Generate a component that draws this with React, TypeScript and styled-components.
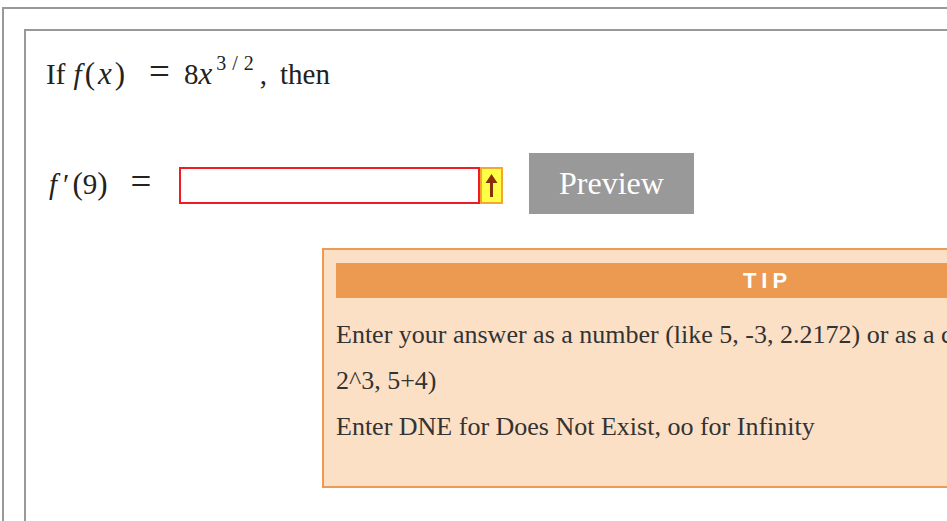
import React from "react";
import styled, { createGlobalStyle } from "styled-components";

const Global = createGlobalStyle`
  html, body { margin: 0; padding: 0; background: #fff; overflow: hidden; }
  body { font-family: "Liberation Serif", "Times New Roman", serif; color: #222; }
`;

const Outer = styled.div`
  margin: 7px 0 0 2px;
  width: 1400px;
  border: 2px solid #999;
  border-right: none;
  padding: 20px 0 0 20px;
`;

const Problem = styled.div`
  border: 2px solid #999;
  border-right: none;
  padding: 25px 20px 40px 20px;
`;

const Question = styled.div`
  font-size: 29px;
  line-height: 36px;
  color: #222;
  white-space: nowrap;
`;

const MI = styled.i<{ $l?: number; $r?: number; $size?: number }>`
  font-family: "Liberation Serif", serif;
  font-style: italic;
  font-size: ${(p) => p.$size ?? 29}px;
  margin-left: ${(p) => p.$l ?? 0}px;
  margin-right: ${(p) => p.$r ?? 0}px;
`;

const Paren = styled.span`
  font-size: 31px;
`;

const Op = styled.span<{ $l: number; $r: number }>`
  font-size: 37px;
  line-height: 0;
  margin-left: ${(p) => p.$l}px;
  margin-right: ${(p) => p.$r}px;
`;

const Sup = styled.sup`
  font-size: 20px;
  line-height: 0;
  vertical-align: 0;
  position: relative;
  top: -14px;
  letter-spacing: 6px;
  margin-left: 3px;
`;

const Then = styled.span`
  margin-left: 13px;
`;

const AnswerRow = styled.div`
  display: flex;
  align-items: center;
  margin-top: 61px;
  font-size: 29px;
`;

const Label = styled.span`
  width: 133px;
  white-space: nowrap;
  padding-left: 3px;
  box-sizing: border-box;
`;

const Prime = styled.span`
  margin: 0 3px 0 6px;
`;

const InputWrap = styled.div`
  display: flex;
  align-items: stretch;
  align-self: flex-start;
  margin-top: 14px;
  height: 37px;
`;

const AnswerInput = styled.input`
  box-sizing: border-box;
  width: 301px;
  height: 37px;
  border: 2px solid #ee1c25;
  outline: none;
  margin: 0;
  padding: 0 6px;
  font-size: 22px;
  background: #fff;
`;

const Flag = styled.div`
  box-sizing: border-box;
  width: 23px;
  height: 37px;
  background: #ffff44;
  border: 2px solid #f4a534;
  display: flex;
  align-items: center;
  justify-content: center;
`;

const PreviewButton = styled.button`
  box-sizing: border-box;
  margin-left: 26px;
  width: 165px;
  height: 61px;
  border: none;
  background: #999;
  color: #fff;
  font-family: "Liberation Serif", "Times New Roman", serif;
  font-size: 32px;
  padding: 0;
`;

const Tip = styled.div`
  box-sizing: border-box;
  margin: 34px 0 0 276px;
  width: 888px;
  border: 2px solid #ee9a52;
  background: #fce0c6;
  padding: 13px 12px 36px 12px;
`;

const TipHeader = styled.div`
  height: 35px;
  background: #ec9a52;
  color: #fff;
  font-family: "Liberation Sans", Arial, sans-serif;
  font-weight: bold;
  font-size: 22px;
  letter-spacing: 5px;
  display: flex;
  align-items: center;
  justify-content: center;
  padding-left: 3px;
`;

const TipText = styled.p`
  margin: 0;
  font-size: 26px;
  line-height: 46px;
  color: #333;
  width: 840px;
`;

const TipBody = styled.div`
  margin-top: 14px;
`;

export default function App() {
  return (
    <>
      <Global />
      <Outer>
        <Problem>
          <Question>
            If <MI $l={1} $r={3}>f</MI>
            <Paren>(</Paren>
            <MI $l={3} $r={3} $size={31}>x</MI>
            <Paren>)</Paren>
            <Op $l={24} $r={14}>=</Op>8<MI $size={31} $r={1}>x</MI>
            <Sup>3/2</Sup>,<Then>then</Then>
          </Question>
          <AnswerRow>
            <Label>
              <MI>f</MI>
              <Prime>′</Prime>
              <Paren>(</Paren>9<Paren>)</Paren>
              <Op $l={23} $r={0}>=</Op>
            </Label>
            <InputWrap>
              <AnswerInput aria-label="answer" />
              <Flag>
                <svg width="13" height="26" viewBox="0 0 13 26">
                  <path d="M6.5 1 L12.5 10 L8 10 L8 24 L5 24 L5 10 L0.5 10 Z" fill="#8b2f0b" />
                </svg>
              </Flag>
            </InputWrap>
            <PreviewButton>Preview</PreviewButton>
          </AnswerRow>
          <Tip>
            <TipHeader>TIP</TipHeader>
            <TipBody>
              <TipText>
                Enter your answer as a number (like 5, -3, 2.2172) or as a calculation (like 5/3, 2^3, 5+4)
              </TipText>
              <TipText>Enter DNE for Does Not Exist, oo for Infinity</TipText>
            </TipBody>
          </Tip>
        </Problem>
      </Outer>
    </>
  );
}
